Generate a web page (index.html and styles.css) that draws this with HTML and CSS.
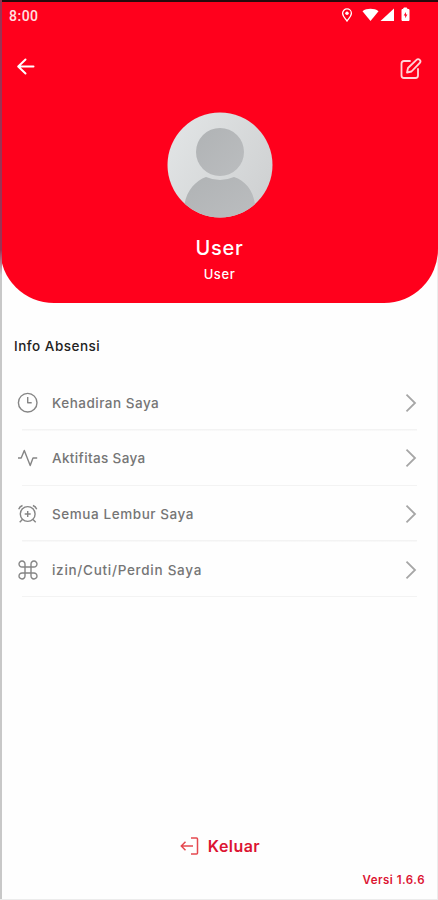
FILE: index.html
```
<!DOCTYPE html>
<html lang="id">
<head>
<meta charset="UTF-8">
<meta name="viewport" content="width=device-width, initial-scale=1">
<title>Profil</title>
<link rel="stylesheet" href="styles.css">
</head>
<body>
<div class="app">
  <div class="header">
    <div class="status">
      <span class="time">8:00</span>
      <svg class="status-icons" width="72" height="16" viewBox="0 0 72 16">
        <path d="M7 14C5 11.2 2.600 9 2.600 6.300a4.400 4.400 0 0 1 8.800 0C11.400 9 9 11.200 7 14z" fill="none" stroke="#fff" stroke-width="1.300"/>
        <circle cx="7" cy="6.300" r="1.700" fill="#fff"/>
        <path d="M22.500 4.200c4-3.200 12-3.200 16 0L30.500 14z" fill="#fff"/>
        <path d="M54 1.500V14H40.500z" fill="#fff"/>
        <path d="M62 2.500h1.800V1h3v1.500H69v11h-7z" fill="#fff" stroke="#fff" stroke-width="1" stroke-linejoin="round"/>
        <path d="M65.900 5l-2.200 3.600h1.500v2.600l2.200-3.600h-1.500z" fill="#f02"/>
      </svg>
    </div>
    <div class="toolbar">
      <svg class="back" width="20" height="20" viewBox="0 0 20 20">
        <path d="M17.500 10.500H2.500M9.500 3.500l-7.300 7 7.300 7"/>
      </svg>
      <svg class="edit" width="24" height="24" viewBox="0 0 24 24">
        <path d="M11 5H5Q2.500 5 2.500 7.500v12Q2.500 22 5 22h11.500q2.500 0 2.500-2.500V13"/>
        <path d="M8 16.500l1-4.500 8.500-8.200a2.200 2.200 0 0 1 3.200 3.200L12.500 15.500z"/>
      </svg>
    </div>
    <svg class="avatar" width="106" height="106" viewBox="0 0 106 106">
      <defs>
        <linearGradient id="bg" x1="0" y1="0" x2="1" y2="0.600">
          <stop offset="0" stop-color="#e3e6e7"/>
          <stop offset="1" stop-color="#d0d2d3"/>
        </linearGradient>
        <linearGradient id="man" x1="0" y1="0" x2="1" y2="1">
          <stop offset="0" stop-color="#b0b3b5"/>
          <stop offset="1" stop-color="#bbbdbf"/>
        </linearGradient>
        <clipPath id="round"><circle cx="53" cy="53" r="52.500"/></clipPath>
      </defs>
      <g clip-path="url(#round)">
        <rect width="106" height="106" fill="url(#bg)"/>
        <path d="M17.500 106V92C20 78 29 68.500 39 65q14 6 28 0c11 3.500 19 13 21 27v14z" fill="url(#man)"/>
        <circle cx="53" cy="40" r="24" fill="url(#man)"/>
      </g>
    </svg>
    <div class="name">User</div>
    <div class="role">User</div>
  </div>

  <div class="title">Info Absensi</div>
  <div class="menu">
    <div class="item">
      <svg class="icon" width="22" height="22" viewBox="0 0 22 22">
        <circle cx="10.700" cy="10.700" r="9.300"/>
        <path d="M10.700 5V10.800h4"/>
      </svg>
      <span class="label kehadiran">Kehadiran Saya</span>
      <svg class="arrow" width="12" height="20" viewBox="0 0 12 20"><path d="M1.500 1.700L10 10l-8.500 8.300"/></svg>
    </div>
    <div class="item">
      <svg class="icon" width="22" height="22" viewBox="0 0 22 22">
        <path d="M1 11h3.200L7.300 3.500l5.900 15 2.800-7.500h4.200"/>
      </svg>
      <span class="label aktifitas">Aktifitas Saya</span>
      <svg class="arrow" width="12" height="20" viewBox="0 0 12 20"><path d="M1.500 1.700L10 10l-8.500 8.300"/></svg>
    </div>
    <div class="item">
      <svg class="icon" width="22" height="22" viewBox="0 0 22 22">
        <circle cx="10.700" cy="11" r="7.400"/>
        <path d="M10.700 8v6M7.700 11h6M1.700 6.200Q2.700 3.500 5.500 2.500M19.700 6.200Q18.700 3.500 15.900 2.500M5.400 16.500L2.700 19.300M16 16.500l2.700 2.800"/>
      </svg>
      <span class="label lembur">Semua Lembur Saya</span>
      <svg class="arrow" width="12" height="20" viewBox="0 0 12 20"><path d="M1.500 1.700L10 10l-8.500 8.300"/></svg>
    </div>
    <div class="item">
      <svg class="icon" width="22" height="22" viewBox="0 0 22 22">
        <path d="M8 8h6v6H8zM8 8H5.200A3 3 0 1 1 8 5.200zM14 8V5.200A3 3 0 1 1 16.800 8zM14 14h2.800a3 3 0 1 1-2.800 2.800zM8 14v2.800A3 3 0 1 1 5.200 14z"/>
      </svg>
      <span class="label izin">izin/Cuti/Perdin Saya</span>
      <svg class="arrow" width="12" height="20" viewBox="0 0 12 20"><path d="M1.500 1.700L10 10l-8.500 8.300"/></svg>
    </div>
  </div>

  <div class="footer">
    <div class="logout">
      <svg width="20" height="20" viewBox="0 0 20 20">
        <path d="M11 2h5.500q1 0 1 1v14q0 1-1 1H11M13 10H1.500M5.500 5.800L1.300 10l4.200 4.200"/>
      </svg>
      <span>Keluar</span>
    </div>
    <div class="version">Versi 1.6.6</div>
  </div>
</div>
</body>
</html>
```
FILE: styles.css
```
* {
  margin: 0;
  padding: 0;
  box-sizing: border-box;
}
body {
  background: #fefefe;
  font-family: Inter, "Liberation Sans", sans-serif;
}
svg {
  display: block;
  fill: none;
  flex: none;
}
.app {
  position: relative;
  display: flex;
  flex-direction: column;
  height: 900px;
  border-right: 1px solid #ececec;
  border-bottom: 1px solid #ececec;
}
/* left window edge */
.app::before {
  content: "";
  position: absolute;
  left: 0;
  top: 0;
  width: 2px;
  height: 100%;
  background: linear-gradient(#9b3354 0, #9b3354 250px, #c8c8c8 275px);
}
.header {
  display: flex;
  flex-direction: column;
  align-items: center;
  height: 303px;
  margin-right: -1px;
  background: #ff001c;
  border-top: 2px solid #260a0c;
  border-radius: 0 0 54px 54px;
  color: #fff;
}
.status {
  display: flex;
  justify-content: space-between;
  width: 100%;
  height: 28px;
  padding: 5px 26px 0 9px;
}
.time {
  font: 500 14px/18px Roboto, sans-serif;
  letter-spacing: 0.500px;
  color: #ffe0e2;
}
.toolbar {
  display: flex;
  justify-content: space-between;
  width: 100%;
  height: 80px;
  padding: 26px 15px 0 16px;
}
.toolbar svg {
  stroke: #fff;
  stroke-width: 2;
  stroke-linecap: round;
  stroke-linejoin: round;
}
.toolbar .edit {
  stroke: #ffd5d9;
  stroke-width: 1.800;
}
.avatar {
  margin: 2px 0 0 1px;
}
.name {
  margin: 18px 0 0 1px;
  font-size: 20px;
  line-height: 24px;
  font-weight: 500;
  letter-spacing: 0.700px;
}
.role {
  margin: 5px 0 0 1px;
  font-size: 13px;
  line-height: 18px;
  font-weight: 500;
  letter-spacing: 0.600px;
}
.title {
  margin: 34px 0 0 14px;
  font-size: 13.500px;
  line-height: 18px;
  font-weight: 500;
  letter-spacing: 0.500px;
  color: #222;
}
.menu {
  margin: 20px 20px 0 17px;
}
.item {
  display: flex;
  align-items: center;
  height: 55.600px;
  background: linear-gradient(#f3f3f3, #f3f3f3) 5px 100% / 100% 1.500px no-repeat;
}
.icon {
  stroke: #858585;
  stroke-width: 1.400;
  stroke-linejoin: round;
}
.label {
  flex: 1;
  margin-left: 13px;
  font-size: 13.500px;
  font-weight: 500;
  color: #757575;
}
.kehadiran { letter-spacing: 0.500px; }
.aktifitas { letter-spacing: 0.370px; }
.lembur { letter-spacing: 0.570px; }
.izin { letter-spacing: 0.720px; }
.arrow {
  stroke: #a6a6a6;
  stroke-width: 1.800;
}
.footer {
  margin-top: auto;
  padding: 0 12px 10px 15px;
  color: #dc1432;
}
.logout {
  display: flex;
  justify-content: center;
  align-items: center;
  gap: 8px;
  font-size: 16px;
  line-height: 20px;
  font-weight: 600;
  letter-spacing: 0.450px;
}
.logout svg {
  stroke: #e5484f;
  stroke-width: 1.500;
}
.version {
  margin-top: 15px;
  text-align: right;
  font-size: 11.500px;
  line-height: 18px;
  font-weight: 600;
  letter-spacing: 0.480px;
}
```
